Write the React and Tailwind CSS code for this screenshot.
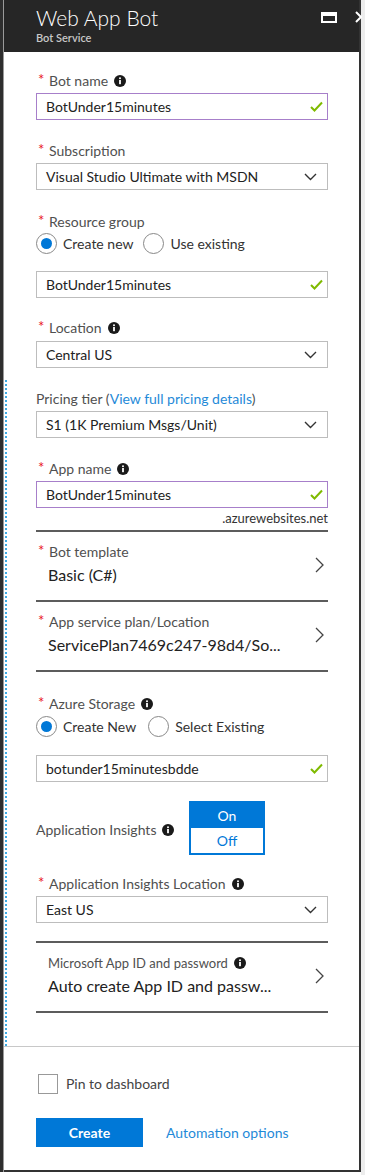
import React from 'react';

const font = { fontFamily: 'Lato, "Liberation Sans", sans-serif' };

function Info() {
  return (
    <svg width="12" height="12" viewBox="0 0 12 12" className="inline-block">
      <circle cx="6" cy="6" r="6" fill="#1a1a1a" />
      <rect x="5.1" y="5" width="1.8" height="4.2" fill="#fff" />
      <circle cx="6" cy="3.2" r="1" fill="#fff" />
    </svg>
  );
}

function Check() {
  return (
    <svg width="13" height="11" viewBox="0 0 13 11">
      <path d="M1 6 L4.5 9.5 L12 1.5" fill="none" stroke="#7fba00" strokeWidth="2" />
    </svg>
  );
}

function ChevronDown() {
  return (
    <svg width="13" height="8" viewBox="0 0 13 8">
      <path d="M1 1 L6.5 6.5 L12 1" fill="none" stroke="#333" strokeWidth="1.4" />
    </svg>
  );
}

function ChevronRight() {
  return (
    <svg width="9" height="16" viewBox="0 0 9 16">
      <path d="M1 1 L8 8 L1 15" fill="none" stroke="#444" strokeWidth="1.3" />
    </svg>
  );
}

function Label({ required, info, children }) {
  return (
    <div className="h-[18px] flex items-center text-[14px] text-[#505050] leading-[18px]">
      {required ? <span className="text-[#e81123] w-[13px] -mt-[4px] pl-[2px] text-[15px]">*</span> : null}
      <span>{children}</span>
      {info ? <span className="ml-[6px] flex items-center"><Info /></span> : null}
    </div>
  );
}

function TextBox({ value, purple }) {
  return (
    <div className={`h-[27px] flex items-center justify-between pl-[9px] pr-[4px] text-[14px] text-[#222] border ${purple ? 'border-[#a77fca]' : 'border-[#bdbdbd]'}`}>
      <span>{value}</span>
      <Check />
    </div>
  );
}

function Select({ value }) {
  return (
    <div className="h-[27px] flex items-center justify-between pl-[9px] pr-[10px] text-[14px] text-[#222] border border-[#bdbdbd]">
      <span>{value}</span>
      <ChevronDown />
    </div>
  );
}

function Radio({ checked, children }) {
  return (
    <div className="flex items-center gap-[6px] text-[14px] text-[#333]">
      <span className="w-[21px] h-[21px] rounded-full border border-[#888] flex items-center justify-center bg-white">
        {checked ? <span className="w-[11px] h-[11px] rounded-full bg-[#0078d7]" /> : null}
      </span>
      <span>{children}</span>
    </div>
  );
}

function NavRow({ required, info, label, value }) {
  return (
    <div className="flex items-center justify-between pt-[11px] pb-[15px] border-b-2 border-[#5c5c5c]">
      <div>
        <Label required={required} info={info}>{label}</Label>
        <div className="mt-[4px] h-[20px] leading-[20px] text-[16px] text-[#222] pl-[12px]">{value}</div>
      </div>
      <div className="pr-[4px] pt-[2px]"><ChevronRight /></div>
    </div>
  );
}

export default function App() {
  return (
    <div className="w-[365px] h-[1175px] bg-white flex relative overflow-hidden" style={font}>
      <div className="w-[3px] h-[1172px] bg-[#2e2e2e]" />
      <div className="w-[1px] h-[1172px] bg-[#9a9a9a]" />

      <div className="w-[357px] h-[1172px] flex flex-col border-r-2 border-b-2 border-[#333] relative">
        {/* header */}
        <div className="h-[52px] bg-[#262626] flex justify-between pl-[32px]">
          <div className="pt-[4px]">
            <div className="text-[21px] leading-[27px] text-white font-light">Web App Bot</div>
            <div className="text-[11px] leading-[14px] text-[#c8c8c8] font-semibold">Bot Service</div>
          </div>
          <div className="flex items-start gap-[18px] pt-[12px] -mr-[4px]">
            <div className="w-[16px] h-[11px] border-2 border-t-[4px] border-white" />
            <svg width="8" height="12" viewBox="0 0 8 12" className="-mt-[1px]">
              <path d="M1 1 L6 6 L1 11" fill="none" stroke="#fff" strokeWidth="2" />
            </svg>
          </div>
        </div>

        {/* dotted edge */}
        <div className="absolute left-[1px] top-[380px] h-[666px] border-l-2 border-dotted border-[#3fa9e0]" />

        {/* form */}
        <div className="flex-1 pl-[32px] pr-[31px] pt-[20px]">
          <Label required info>Bot name</Label>
          <div className="mt-[3px]"><TextBox value="BotUnder15minutes" purple /></div>

          <div className="mt-[22px]"><Label required>Subscription</Label></div>
          <div className="mt-[3px]"><Select value="Visual Studio Ultimate with MSDN" /></div>

          <div className="mt-[23px]"><Label required>Resource group</Label></div>
          <div className="mt-[2px] flex items-center gap-[10px]">
            <Radio checked>Create new</Radio>
            <Radio>Use existing</Radio>
          </div>
          <div className="mt-[17px]"><TextBox value="BotUnder15minutes" /></div>

          <div className="mt-[21px]"><Label required info>Location</Label></div>
          <div className="mt-[4px]"><Select value="Central US" /></div>

          <div className="mt-[22px]">
            <div className="h-[18px] leading-[18px] text-[14px] text-[#505050]">
              Pricing tier (<span className="text-[#1f8ad8]">View full pricing details</span>)
            </div>
          </div>
          <div className="mt-[3px]"><Select value="S1 (1K Premium Msgs/Unit)" /></div>

          <div className="mt-[22px]"><Label required info>App name</Label></div>
          <div className="mt-[3px]"><TextBox value="BotUnder15minutes" purple /></div>
          <div className="h-[22px] leading-[20px] text-right text-[13px] text-[#333] border-b-2 border-[#5c5c5c] box-content">.azurewebsites.net</div>

          <NavRow required label="Bot template" value="Basic (C#)" />
          <NavRow required label="App service plan/Location" value="ServicePlan7469c247-98d4/So..." />

          <div className="mt-[23px]"><Label required info>Azure Storage</Label></div>
          <div className="mt-[3px] flex items-center gap-[12px]">
            <Radio checked>Create New</Radio>
            <Radio>Select Existing</Radio>
          </div>
          <div className="mt-[18px]"><TextBox value="botunder15minutesbdde" /></div>

          <div className="mt-[19px] flex items-center">
            <div className="w-[153px] pt-[3px] flex items-center text-[14px] text-[#505050]">
              <span>Application Insights</span>
              <span className="ml-[6px] flex items-center"><Info /></span>
            </div>
            <div className="w-[76px] border-2 border-[#0078d7] text-[14px]">
              <div className="h-[25px] bg-[#0078d7] text-white flex items-center justify-center">On</div>
              <div className="h-[25px] bg-white text-[#0078d7] flex items-center justify-center">Off</div>
            </div>
          </div>

          <div className="mt-[20px]"><Label required info>Application Insights Location</Label></div>
          <div className="mt-[3px]"><Select value="East US" /></div>

          <div className="mt-[18px] border-t-2 border-[#5c5c5c]" />
          <NavRow info label={<span className="pl-[12px] text-[13px]">Microsoft App ID and password</span>} value="Auto create App ID and passw..." />
        </div>

        {/* footer */}
        <div className="h-[124px] border-t border-[#c8c8c8] pl-[32px] pt-[26px]">
          <div className="flex items-center gap-[8px] pl-[2px]">
            <span className="w-[20px] h-[20px] border border-[#999] bg-white" />
            <span className="text-[14px] text-[#444]">Pin to dashboard</span>
          </div>
          <div className="mt-[24px] flex items-center">
            <div className="w-[107px] h-[29px] bg-[#0078d7] text-white font-bold text-[14px] flex items-center justify-center">Create</div>
            <div className="ml-[23px] text-[14px] text-[#1f8ad8]">Automation options</div>
          </div>
        </div>
      </div>
      <div className="w-[4px] bg-[#ededed]" />
    </div>
  );
}
